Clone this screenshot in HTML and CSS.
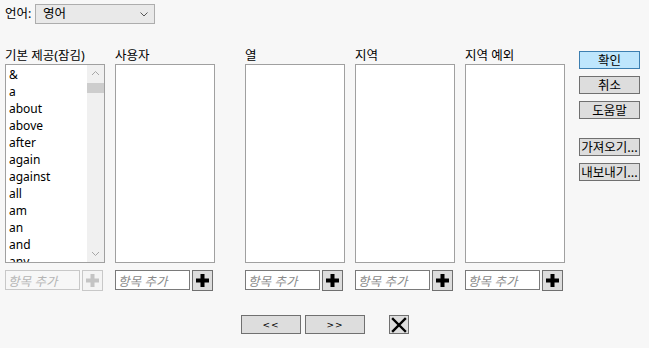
FILE: index.html
```html
<!DOCTYPE html>
<html lang="ko">
<head>
  <meta charset="UTF-8">
  <title>제외 단어</title>
  <link rel="stylesheet" href="styles.css">
</head>
<body>
  <div class="page">
    <div class="lang-row">
      <label class="lang-label">언어:</label>
      <div class="select">
        <span>영어</span>
        <svg class="chevron" width="8" height="5" viewBox="0 0 8 5"><polyline points="0.5,0.5 4,4 7.5,0.5" fill="none" stroke="#555" stroke-width="1"/></svg>
      </div>
    </div>

    <div class="main">
      <div class="col">
        <div class="col-title">기본 제공(잠김)</div>
        <div class="list">
          <ul class="items">
            <li>&amp;</li>
            <li>a</li>
            <li>about</li>
            <li>above</li>
            <li>after</li>
            <li>again</li>
            <li>against</li>
            <li>all</li>
            <li>am</li>
            <li>an</li>
            <li>and</li>
            <li>any</li>
          </ul>
          <div class="scrollbar">
            <svg class="arrow" width="17" height="17" viewBox="0 0 17 17"><polyline points="5,10 8.5,6.5 12,10" fill="none" stroke="#a6a6a6" stroke-width="1"/></svg>
            <div class="thumb"></div>
            <div class="track"></div>
            <svg class="arrow" width="17" height="17" viewBox="0 0 17 17"><polyline points="5,7 8.5,10.5 12,7" fill="none" stroke="#a6a6a6" stroke-width="1"/></svg>
          </div>
        </div>
        <div class="add-row disabled">
          <input class="add-input" type="text" placeholder="항목 추가" disabled>
          <button class="plus-btn" type="button" disabled>
            <svg width="13" height="13" viewBox="0 0 13 13"><path d="M4.5 0h4v4.5h4.5v4h-4.5v4.5h-4v-4.5h-4.5v-4h4.5z" fill="#c4c4c4"/></svg>
          </button>
        </div>
      </div>

      <div class="col">
        <div class="col-title">사용자</div>
        <div class="list"></div>
        <div class="add-row">
          <input class="add-input" type="text" placeholder="항목 추가">
          <button class="plus-btn" type="button">
            <svg width="13" height="13" viewBox="0 0 13 13"><path d="M4.5 0h4v4.5h4.5v4h-4.5v4.5h-4v-4.5h-4.5v-4h4.5z" fill="#000"/></svg>
          </button>
        </div>
      </div>

      <div class="col wide-gap">
        <div class="col-title">열</div>
        <div class="list"></div>
        <div class="add-row">
          <input class="add-input" type="text" placeholder="항목 추가">
          <button class="plus-btn" type="button">
            <svg width="13" height="13" viewBox="0 0 13 13"><path d="M4.5 0h4v4.5h4.5v4h-4.5v4.5h-4v-4.5h-4.5v-4h4.5z" fill="#000"/></svg>
          </button>
        </div>
      </div>

      <div class="col">
        <div class="col-title">지역</div>
        <div class="list"></div>
        <div class="add-row">
          <input class="add-input" type="text" placeholder="항목 추가">
          <button class="plus-btn" type="button">
            <svg width="13" height="13" viewBox="0 0 13 13"><path d="M4.5 0h4v4.5h4.5v4h-4.5v4.5h-4v-4.5h-4.5v-4h4.5z" fill="#000"/></svg>
          </button>
        </div>
      </div>

      <div class="col">
        <div class="col-title">지역 예외</div>
        <div class="list"></div>
        <div class="add-row">
          <input class="add-input" type="text" placeholder="항목 추가">
          <button class="plus-btn" type="button">
            <svg width="13" height="13" viewBox="0 0 13 13"><path d="M4.5 0h4v4.5h4.5v4h-4.5v4.5h-4v-4.5h-4.5v-4h4.5z" fill="#000"/></svg>
          </button>
        </div>
      </div>

      <div class="actions">
        <button class="btn primary" type="button">확인</button>
        <button class="btn" type="button">취소</button>
        <button class="btn" type="button">도움말</button>
        <button class="btn spaced" type="button">가져오기...</button>
        <button class="btn" type="button">내보내기...</button>
      </div>
    </div>

    <div class="bottom">
      <button class="btn nav" type="button">&lt;&lt;</button>
      <button class="btn nav" type="button">&gt;&gt;</button>
      <button class="btn close-btn" type="button">
        <svg width="16" height="16" viewBox="0 0 16 16"><path d="M2 2L14 14M14 2L2 14" stroke="#000" stroke-width="2.4" stroke-linecap="square"/></svg>
      </button>
    </div>
  </div>
</body>
</html>
```

FILE: styles.css
```css
body {
  margin: 0;
  background-color: #f7f7f7;
  font-family: "Noto Sans", "Noto Sans CJK KR", sans-serif;
  font-size: 12px;
  color: #000;
}
.page {
  padding: 4px 5px;
}

/* language row */
.lang-row {
  display: flex;
  align-items: center;
  height: 20px;
}
.lang-label {
  width: 30px;
  line-height: 16px;
  font-size: 12.5px;
}
.select {
  box-sizing: border-box;
  width: 120px;
  height: 20px;
  border: 1px solid #adadad;
  background-color: #e9e9e9;
  display: flex;
  align-items: center;
  justify-content: space-between;
  padding: 0 6px 0 7px;
  line-height: 16px;
  font-size: 12.5px;
}
.chevron {
  display: block;
}

/* columns */
.main {
  display: flex;
  margin-top: 24px;
}
.col {
  width: 100px;
  margin-right: 10px;
}
.col.wide-gap {
  margin-left: 20px;
}
.col:nth-child(5) {
  margin-right: 14px;
}
.col-title {
  height: 16px;
  line-height: 15px;
  font-size: 12.5px;
  white-space: nowrap;
}
.list {
  box-sizing: border-box;
  height: 199px;
  border: 1px solid #a0a0a0;
  background-color: #fff;
  display: flex;
  overflow: hidden;
}
.items {
  list-style: none;
  margin: 0;
  padding: 1px 0 0 3px;
  flex: 1;
  overflow: hidden;
}
.items li {
  height: 17px;
  line-height: 17px;
}
.scrollbar {
  width: 17px;
  background-color: #f0f0f0;
  display: flex;
  flex-direction: column;
}
.arrow {
  display: block;
  flex: none;
}
.thumb {
  height: 10px;
  margin-top: 1px;
  background-color: #cdcdcd;
}
.track {
  flex: 1;
}

/* add row */
.add-row {
  display: flex;
  align-items: flex-start;
  margin-top: 7px;
}
.add-input {
  box-sizing: border-box;
  width: 75px;
  height: 20px;
  border: 1px solid #7a7a7a;
  background-color: #fff;
  padding: 0 2px;
  font-family: "Noto Sans CJK KR", sans-serif;
  font-size: 12.5px;
  font-style: italic;
  outline: none;
}
.add-input::placeholder {
  color: #8a8a8a;
}
.plus-btn {
  box-sizing: border-box;
  width: 21px;
  height: 21px;
  margin-left: 2px;
  padding: 0;
  border: 1px solid #707070;
  background-color: #dddddd;
  display: flex;
  align-items: center;
  justify-content: center;
}
.disabled .add-input {
  border-color: #c8c8c8;
  background-color: #f7f7f7;
}
.disabled .add-input::placeholder {
  color: #b5b5b5;
}
.disabled .plus-btn {
  border-color: #c8c8c8;
  background-color: #f4f4f4;
}

/* buttons */
.btn {
  box-sizing: border-box;
  height: 18px;
  padding: 0;
  border: 1px solid #707070;
  background-color: #dddddd;
  font-family: "Noto Sans CJK KR", sans-serif;
  font-size: 12.5px;
  line-height: 14px;
  color: #000;
  white-space: nowrap;
}
.actions {
  display: flex;
  flex-direction: column;
  gap: 7px;
  margin-top: 3px;
}
.actions .btn {
  width: 61px;
}
.btn.primary {
  border-color: #3c7fb1;
  background-color: #bee6fd;
}
.btn.spaced {
  margin-top: 12px;
}

/* bottom row */
.bottom {
  display: flex;
  margin-top: 24px;
  padding-left: 236px;
}
.btn.nav {
  width: 60px;
  height: 19px;
  margin-right: 4px;
  font-family: "DejaVu Sans", sans-serif;
  font-size: 9px;
  letter-spacing: 1px;
}
.btn.close-btn {
  width: 20px;
  height: 19px;
  margin-left: 20px;
  display: flex;
  align-items: center;
  justify-content: center;
}
```
